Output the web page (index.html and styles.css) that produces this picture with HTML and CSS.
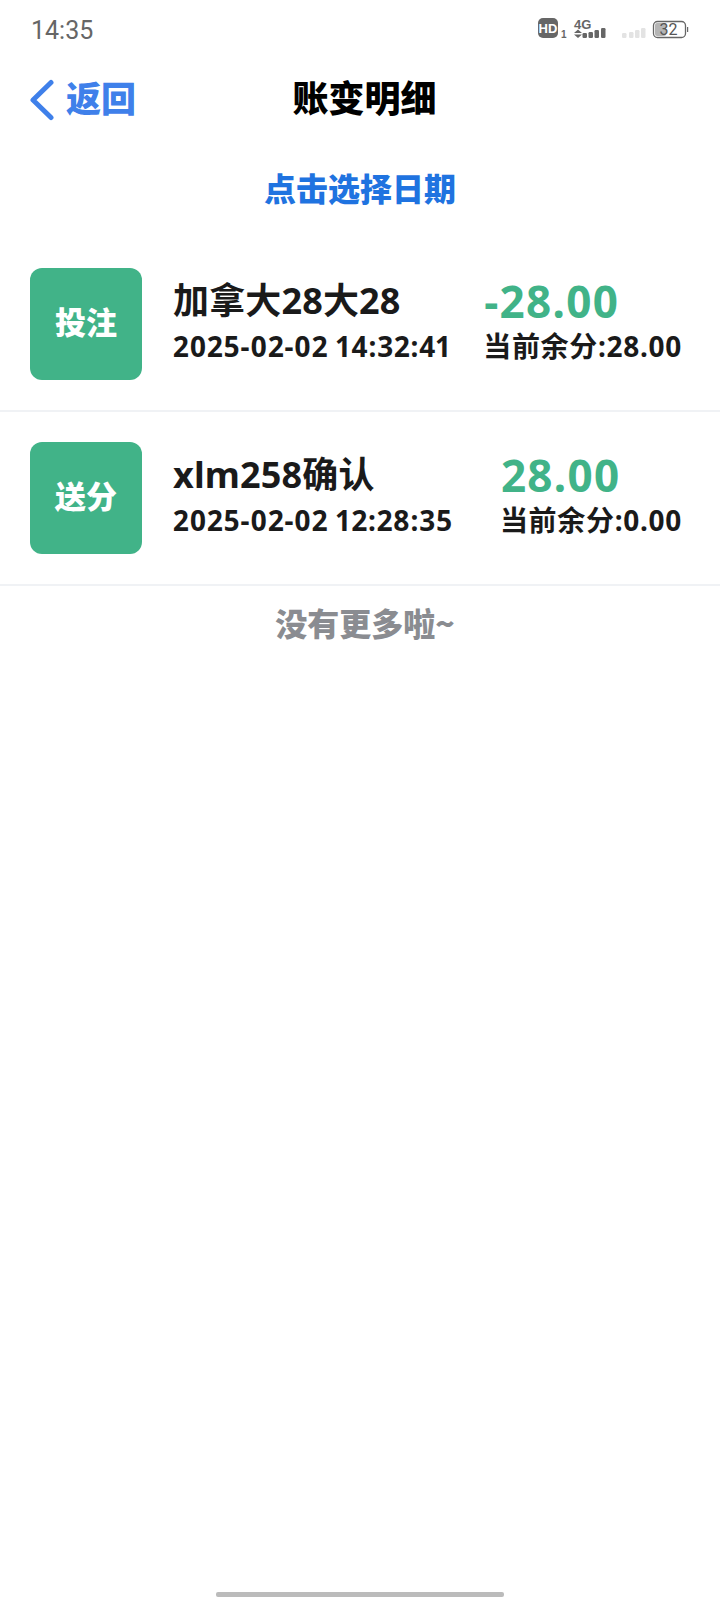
FILE: index.html
```html
<!DOCTYPE html>
<html lang="zh-CN">
  <head>
    <meta charset="UTF-8" />
    <meta name="viewport" content="width=device-width, initial-scale=1.0" />
    <title>账变明细</title>
    <link rel="stylesheet" href="styles.css">
  </head>
  <body>
    <div class="page">
      <div class="status-bar">
        <span class="status-time">14:35</span>
        <svg class="status-icons" width="152" height="24" viewBox="0 0 152 24">
          <!-- HD -->
          <rect x="0" y="0" width="20" height="20" rx="5" fill="#666"/>
          <text x="10" y="14.500" class="hd-text" text-anchor="middle">HD</text>
          <text x="23" y="20" class="sim-text">1</text>
          <!-- 4G + signal -->
          <text x="36" y="11" class="net-text">4G</text>
          <path d="M36 15 L40 11.500 L44 15 Z M36 16.500 L44 16.500 L40 20 Z" fill="#666"/>
          <rect x="44.500" y="15" width="4.500" height="5" rx="1.200" fill="#666"/>
          <rect x="50.500" y="14" width="4.500" height="6" rx="1.200" fill="#666"/>
          <rect x="56.500" y="12" width="4.500" height="8" rx="1.200" fill="#666"/>
          <rect x="63" y="10" width="4.500" height="10" rx="1.200" fill="#666"/>
          <!-- second sim signal -->
          <rect x="84" y="15" width="4.500" height="5" rx="1.200" fill="#e3e3e3"/>
          <rect x="91" y="14" width="4.500" height="6" rx="1.200" fill="#e3e3e3"/>
          <rect x="97" y="12" width="4.500" height="8" rx="1.200" fill="#e3e3e3"/>
          <rect x="103" y="10" width="4.500" height="10" rx="1.200" fill="#e3e3e3"/>
          <!-- battery -->
          <rect x="115.500" y="3.500" width="32" height="16" rx="4" fill="none" stroke="#666" stroke-width="1.300"/>
          <rect x="117" y="5" width="11" height="13" rx="2" fill="#b5b5b5"/>
          <text x="130.500" y="17" class="batt-text" text-anchor="middle">32</text>
          <rect x="149" y="9" width="1.200" height="5" fill="#666"/>
        </svg>
      </div>

      <div class="nav-bar">
        <div class="nav-back">
          <svg class="back-icon" width="26" height="42" viewBox="0 0 26 42">
            <path d="M22 3.500 L4 21 L22 38.500" fill="none" stroke="#3f80ea" stroke-width="5" stroke-linecap="round" stroke-linejoin="round"/>
          </svg>
          <span>返回</span>
        </div>
        <div class="nav-title">账变明细</div>
      </div>

      <div class="date-pick">点击选择日期</div>

      <div class="list">
        <div class="row">
          <div class="badge">投注</div>
          <div class="info">
            <div class="info-name">加拿大28大28</div>
            <div class="info-time">2025-02-02 14:32:41</div>
          </div>
          <div class="money">
            <div class="money-num">-28.00</div>
            <div class="money-left">当前余分:28.00</div>
          </div>
        </div>
        <div class="row">
          <div class="badge">送分</div>
          <div class="info">
            <div class="info-name">xlm258确认</div>
            <div class="info-time">2025-02-02 12:28:35</div>
          </div>
          <div class="money">
            <div class="money-num">28.00</div>
            <div class="money-left">当前余分:0.00</div>
          </div>
        </div>
      </div>

      <div class="no-more">没有更多啦~</div>

      <div class="home-bar"></div>
    </div>
  </body>
</html>
```

FILE: styles.css
```css
* {
  box-sizing: border-box;
}

body {
  margin: 0;
  background-color: #fff;
  font-family: "Noto Sans", "Noto Sans CJK SC", sans-serif;
  color: #1a1a1a;
}

.page {
  position: relative;
  width: 720px;
  height: 1600px;
  overflow: hidden;
}

/* 状态栏 */
.status-bar {
  display: flex;
  justify-content: space-between;
  align-items: center;
  height: 60px;
  padding: 0 30px 0 31px;
}

.status-time {
  font-family: Roboto, sans-serif;
  font-size: 25px;
  color: #666;
}

.hd-text {
  font-family: "Liberation Sans", sans-serif;
  font-size: 13px;
  font-weight: bold;
  fill: #fff;
}

.sim-text {
  font-family: "Liberation Sans", sans-serif;
  font-size: 10px;
  font-weight: bold;
  fill: #666;
}

.net-text {
  font-family: "Liberation Sans", sans-serif;
  font-size: 13px;
  font-weight: bold;
  fill: #666;
}

.batt-text {
  font-family: Roboto, sans-serif;
  font-size: 16px;
  fill: #555;
}

/* 导航 */
.nav-bar {
  position: relative;
  display: flex;
  align-items: center;
  justify-content: center;
  height: 72px;
  padding-left: 9px;
}

.nav-back {
  position: absolute;
  left: 29px;
  top: 0;
  bottom: 0;
  display: flex;
  align-items: center;
  gap: 11px;
  font-family: "Noto Sans CJK SC", sans-serif;
  font-size: 35px;
  font-weight: 900;
  color: #3f80ea;
}

.back-icon {
  margin-top: 7px;
}

.nav-title {
  font-family: "Noto Sans CJK SC", sans-serif;
  font-size: 36px;
  font-weight: 900;
  color: #000;
}

.date-pick {
  margin-top: 32px;
  text-align: center;
  font-family: "Noto Sans CJK SC", sans-serif;
  font-size: 32px;
  line-height: 46px;
  font-weight: 900;
  color: #1f73e0;
}

/* 列表 */
.list {
  margin-top: 28px;
}

.row {
  display: flex;
  align-items: flex-start;
  height: 174px;
  padding: 30px 38px 0 30px;
  border-bottom: 2px solid #f0f2f5;
}

.badge {
  display: flex;
  align-items: center;
  justify-content: center;
  flex: none;
  width: 112px;
  height: 112px;
  padding-bottom: 8px;
  border-radius: 12px;
  background-color: #41b388;
  color: #fff;
  font-family: "Noto Sans CJK SC", sans-serif;
  font-size: 31px;
  font-weight: 900;
}

.info {
  flex: 1;
  margin-left: 31px;
}

.info-name {
  margin-top: 8px;
  font-size: 36px;
  line-height: 50px;
  font-weight: 700;
  letter-spacing: 0.15px;
}

.info-time,
.money-left {
  margin-top: 1px;
  font-size: 28px;
  line-height: 38px;
  font-weight: 700;
  letter-spacing: 0.7px;
  white-space: nowrap;
}

.info-time {
  font-variant-numeric: proportional-nums;
  letter-spacing: 0.78px;
}

.money {
  flex: none;
}

.money-num {
  margin-top: 8px;
  margin-left: 1px;
  font-size: 44px;
  line-height: 50px;
  font-weight: 700;
  letter-spacing: 1.3px;
  color: #41b388;
}

.money-left {
  margin-top: 1px;
}

.no-more {
  margin-top: 13px;
  padding-left: 10px;
  text-align: center;
  font-family: "Noto Sans CJK SC", sans-serif;
  font-size: 32px;
  line-height: 46px;
  font-weight: 900;
  color: #8a8c91;
}

.home-bar {
  position: absolute;
  left: 216px;
  bottom: 3px;
  width: 288px;
  height: 5px;
  border-radius: 2px;
  background-color: #bbb;
}
```
